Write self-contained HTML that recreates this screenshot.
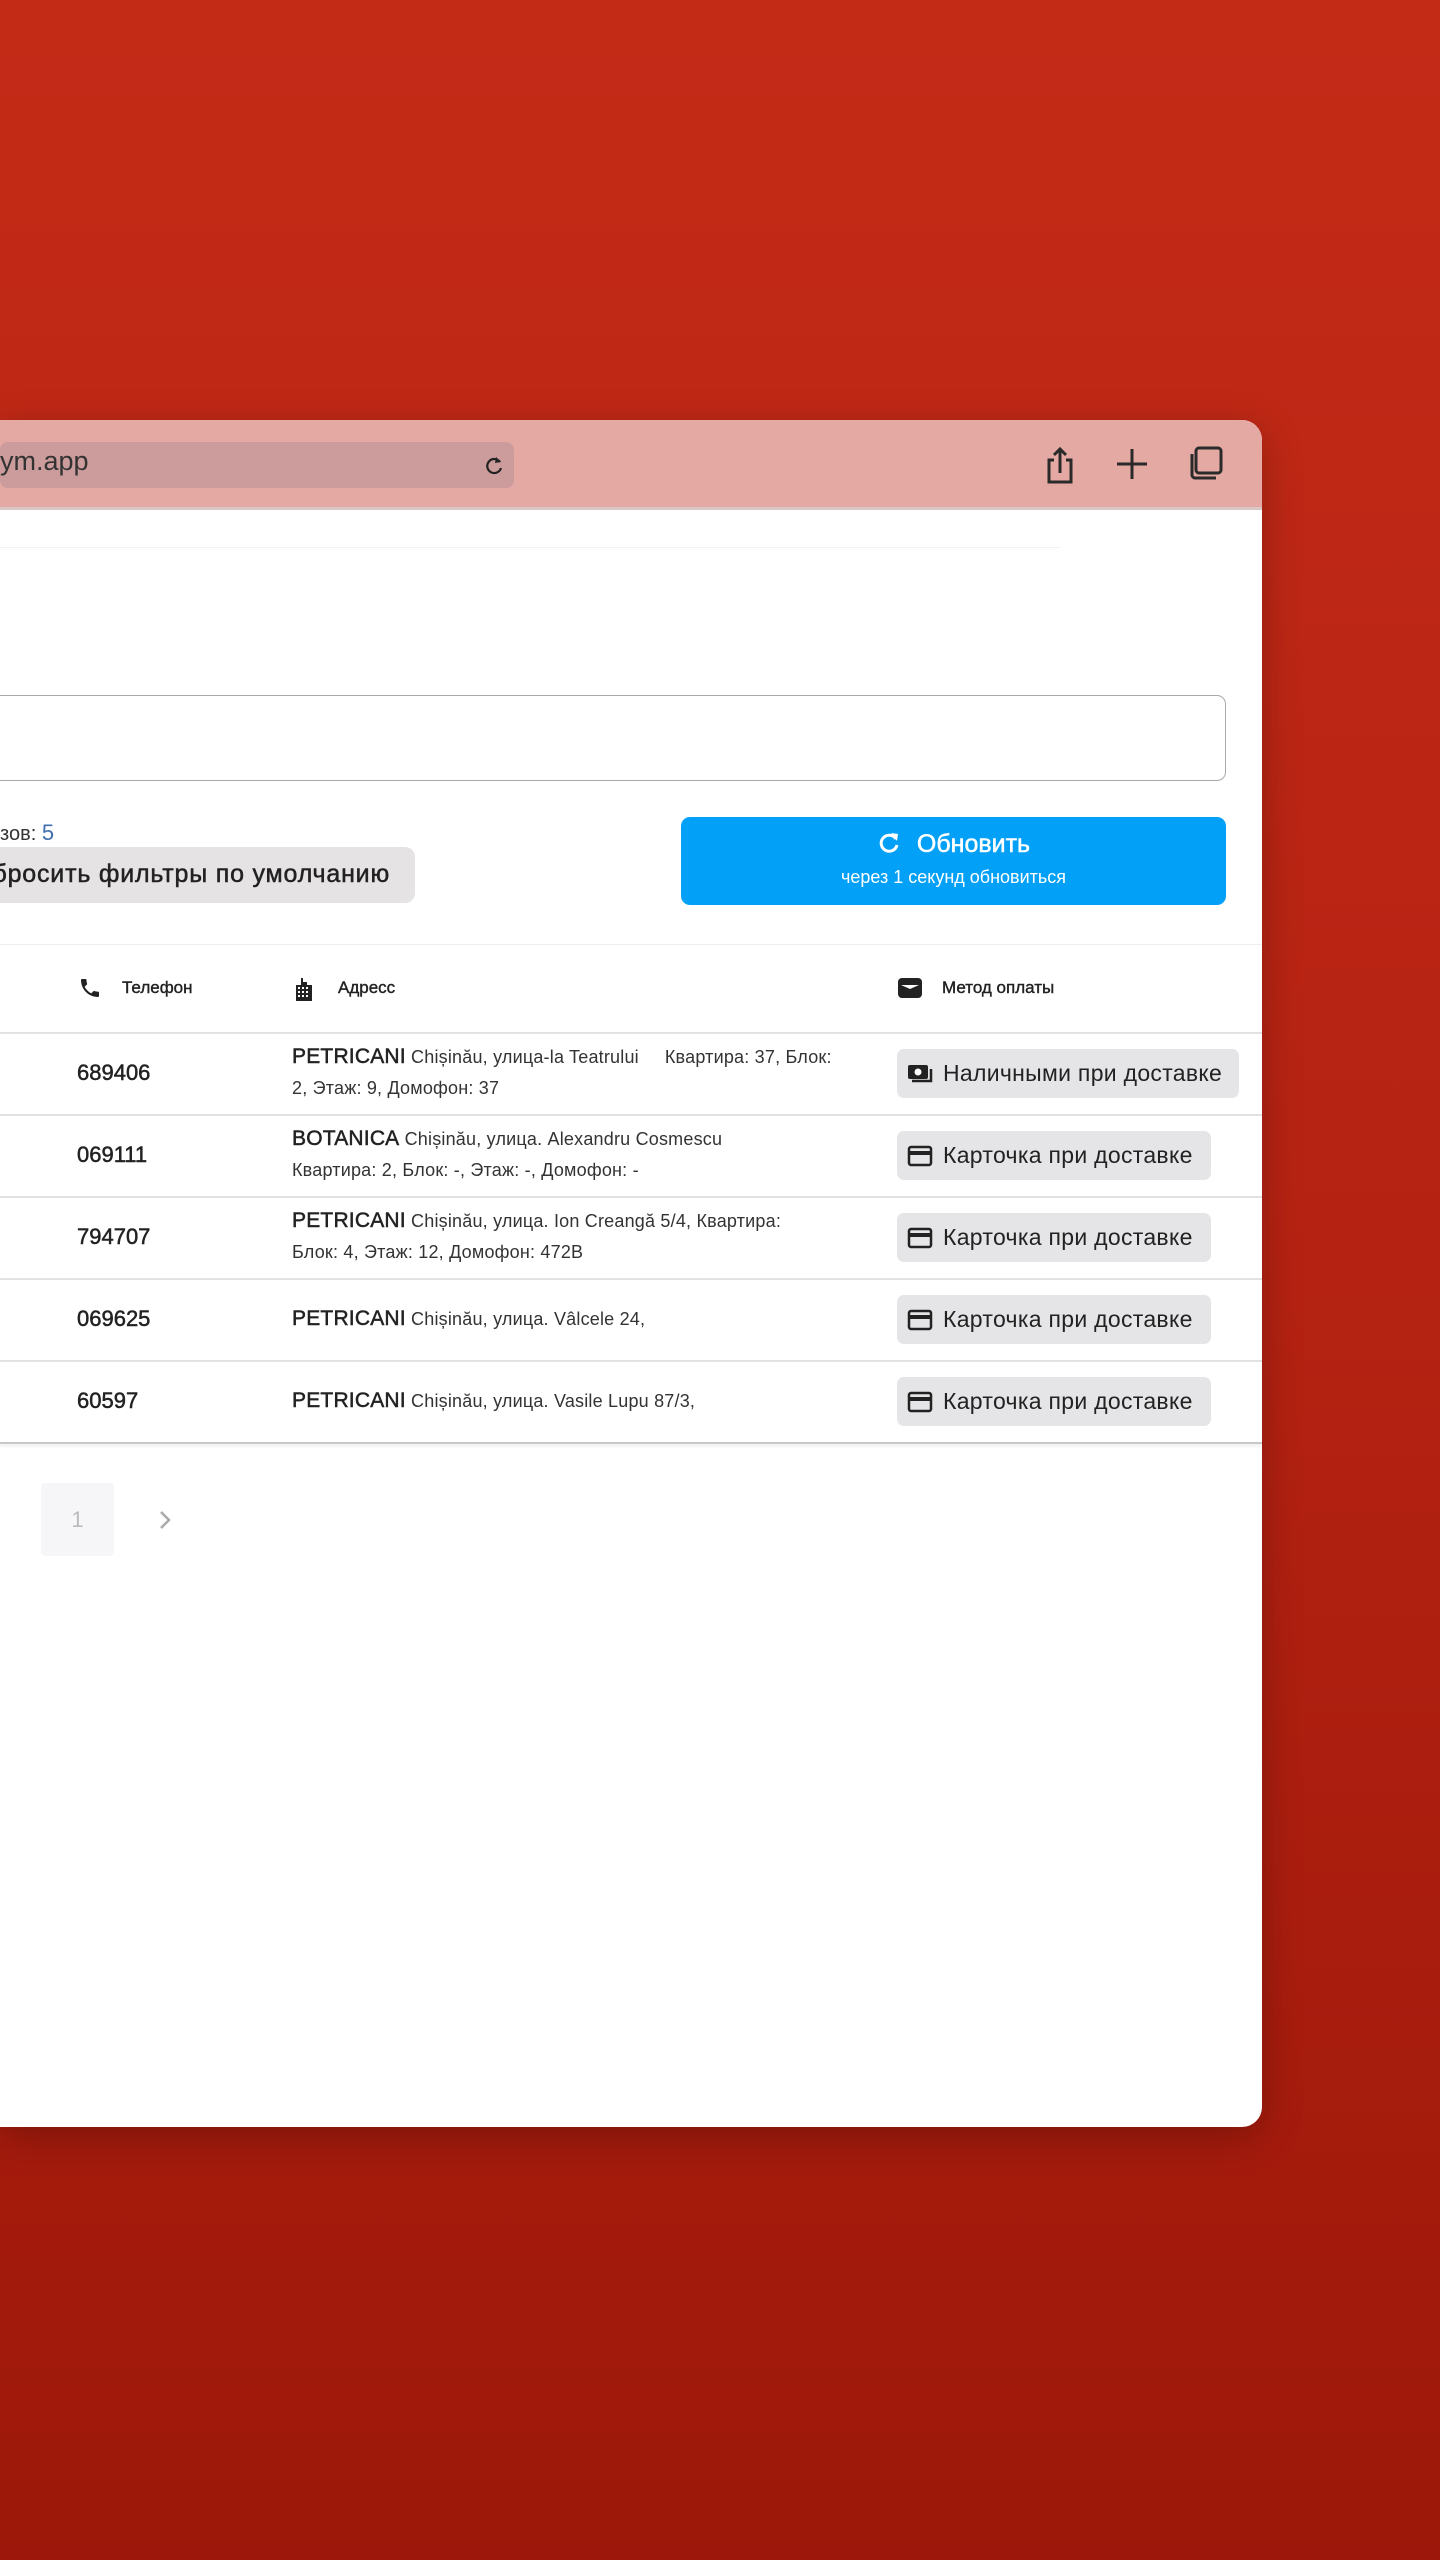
<!DOCTYPE html>
<html><head><meta charset="utf-8"><style>
*{margin:0;padding:0;box-sizing:border-box}
body{width:1440px;height:2560px;overflow:hidden;background:linear-gradient(180deg,#c42b17 0%,#b52212 50%,#9d180a 100%);font-family:"Liberation Sans",sans-serif;color:#222;position:relative}
.win{position:absolute;left:0;top:420px;width:1262px;height:1707px;background:#fff;border-radius:0 20px 20px 0;overflow:hidden;box-shadow:0 10px 40px rgba(0,0,0,.25)}
.a{position:absolute}
.m{-webkit-text-stroke:0.5px currentColor}
.bar{left:0;top:0;width:100%;height:90px;background:#e4a9a2;border-bottom:3px solid #d9c7c6}
.url{left:0;top:22px;width:514px;height:46px;background:#cc9b9b;border-radius:8px}
.row{left:0;width:1262px;height:82px;border-top:2px solid #e2e2e2}
.ph{left:77px;font-size:22px;color:#222;-webkit-text-stroke:0.5px #222}
.ad{left:292px;width:590px;font-size:18px;line-height:31px;color:#333;letter-spacing:.2px}
.ad b{font-size:21px;font-weight:normal;color:#222;-webkit-text-stroke:0.5px #222}
.chip{left:897px;height:49px;background:#e5e4e6;border-radius:7px;font-size:23px;color:#222;display:flex;align-items:center;padding-left:10px;letter-spacing:.3px}
.chip svg{margin-right:10px}
.hd{font-size:17px;-webkit-text-stroke:0.4px #222}
</style></head><body>
<div class="win">
 <div class="a bar"></div>
 <div class="a url"></div>
 <div class="a" style="left:0;top:26px;font-size:27px;color:#333">ym.app</div>
 <svg class="a" style="left:482px;top:34px" width="24" height="24" viewBox="0 0 24 24"><path d="M18 8A7 7 0 1 0 19 14" fill="none" stroke="#222" stroke-width="2.2"/><path d="M14 3l5 5-6 1z" fill="#222"/></svg>
 <svg class="a" style="left:1045px;top:26px" width="30" height="38" viewBox="0 0 30 38"><path d="M9 14H4v22h22V14h-5" fill="none" stroke="#2a2a2a" stroke-width="3"/><path d="M15 27V3M9 9l6-6 6 6" fill="none" stroke="#2a2a2a" stroke-width="3"/></svg>
 <svg class="a" style="left:1117px;top:29px" width="30" height="30" viewBox="0 0 30 30"><path d="M15 0v30M0 15h30" stroke="#2a2a2a" stroke-width="3"/></svg>
 <svg class="a" style="left:1187px;top:26px" width="36" height="36" viewBox="0 0 36 36"><rect x="9" y="2" width="25" height="25" rx="3" fill="none" stroke="#2a2a2a" stroke-width="3"/><path d="M5 8v21a3 3 0 0 0 3 3h21" fill="none" stroke="#2a2a2a" stroke-width="3"/></svg>
 <div class="a" style="left:0;top:127px;width:1060px;height:1px;background:#f2f2f2"></div>
 <div class="a" style="left:-10px;top:275px;width:1236px;height:86px;border:1.5px solid #a9a9a9;border-radius:9px"></div>
 <div class="a" style="left:0;top:400px;font-size:20px;color:#333">зов: <span style="color:#3f6fae;font-size:22px">5</span></div>
 <div class="a" style="left:-30px;top:427px;width:445px;height:56px;background:#e6e3e4;border-radius:10px"></div>
 <div class="a m" style="left:-400px;top:440px;width:790px;text-align:right;font-size:25px;letter-spacing:0.8px;color:#222;white-space:nowrap">Сбросить фильтры по умолчанию</div>
 <div class="a" style="left:681px;top:397px;width:545px;height:88px;background:#03a0f8;border-radius:9px;color:#fff;text-align:center">
  <div class="m" style="margin-top:13px;font-size:25px"><svg width="24" height="24" viewBox="0 0 24 24" style="vertical-align:-3px;margin-right:16px"><path d="M19 8A8 8 0 1 0 20 14" fill="none" stroke="#fff" stroke-width="3"/><path d="M14 2l7 1-1 7z" fill="#fff"/></svg>Обновить</div>
  <div style="margin-top:8px;font-size:18px">через 1 секунд обновиться</div>
 </div>
 <div class="a" style="left:0;top:524px;width:1262px;height:1px;background:#eee"></div>
 <svg class="a" style="left:78px;top:556px" width="24" height="24" viewBox="0 0 24 24"><path d="M6.6 10.8c1.4 2.8 3.8 5.1 6.6 6.6l2.2-2.2c.3-.3.7-.4 1-.2 1.1.4 2.300.6 3.600.6.6 0 1 .4 1 1V20c0 .6-.4 1-1 1C10.6 21 3 13.4 3 4c0-.6.4-1 1-1h3.5c.6 0 1 .4 1 1 0 1.3.2 2.5.6 3.6.1.3 0 .7-.2 1z" fill="#222"/></svg>
 <div class="a hd" style="left:122px;top:558px">Телефон</div>
 <svg class="a" style="left:293px;top:555px" width="24" height="26" viewBox="0 0 24 26"><path d="M8 3h2v4h4v3h5v16H3V10h5z" fill="#222"/><g fill="#fff"><rect x="5" y="12" width="2" height="2"/><rect x="9" y="12" width="2" height="2"/><rect x="13" y="12" width="2" height="2"/><rect x="5" y="16" width="2" height="2"/><rect x="9" y="16" width="2" height="2"/><rect x="13" y="16" width="2" height="2"/><rect x="5" y="20" width="2" height="2"/><rect x="9" y="20" width="2" height="2"/><rect x="13" y="20" width="2" height="2"/></g></svg>
 <div class="a hd" style="left:338px;top:558px">Адресс</div>
 <svg class="a" style="left:897px;top:557px" width="26" height="22" viewBox="0 0 26 22"><rect x="1" y="1" width="24" height="20" rx="4" fill="#222"/><path d="M4 8h18l-9 4z" fill="#fff"/></svg>
 <div class="a hd" style="left:942px;top:558px">Метод оплаты</div>

 <div class="a row" style="top:612px"></div>
 <div class="a ph" style="top:640px">689406</div>
 <div class="a ad" style="top:621px"><b>PETRICANI</b> Chișinău, улица-la Teatrului &nbsp;&nbsp;&nbsp; Квартира: 37, Блок:<br>2, Этаж: 9, Домофон: 37</div>
 <div class="a chip" style="top:629px;width:342px"><svg width="26" height="22" viewBox="0 0 26 22"><rect x="1" y="2" width="20" height="14" rx="2" fill="#222"/><circle cx="11" cy="9" r="3.5" fill="#fff"/><path d="M24 6v12H5" fill="none" stroke="#222" stroke-width="2.5"/></svg>Наличными при доставке</div>

 <div class="a row" style="top:694px"></div>
 <div class="a ph" style="top:722px">069111</div>
 <div class="a ad" style="top:703px"><b>BOTANICA</b> Chișinău, улица. Alexandru Cosmescu<br>Квартира: 2, Блок: -, Этаж: -, Домофон: -</div>
 <div class="a chip" style="top:711px;width:314px"><svg width="26" height="22" viewBox="0 0 26 22"><rect x="2" y="2" width="22" height="18" rx="2" fill="none" stroke="#222" stroke-width="2.5"/><rect x="2" y="6" width="22" height="4" fill="#222"/></svg>Карточка при доставке</div>

 <div class="a row" style="top:776px"></div>
 <div class="a ph" style="top:804px">794707</div>
 <div class="a ad" style="top:785px"><b>PETRICANI</b> Chișinău, улица. Ion Creangă 5/4, Квартира:<br>Блок: 4, Этаж: 12, Домофон: 472B</div>
 <div class="a chip" style="top:793px;width:314px"><svg width="26" height="22" viewBox="0 0 26 22"><rect x="2" y="2" width="22" height="18" rx="2" fill="none" stroke="#222" stroke-width="2.5"/><rect x="2" y="6" width="22" height="4" fill="#222"/></svg>Карточка при доставке</div>

 <div class="a row" style="top:858px"></div>
 <div class="a ph" style="top:886px">069625</div>
 <div class="a ad" style="top:883px"><b>PETRICANI</b> Chișinău, улица. Vâlcele 24,</div>
 <div class="a chip" style="top:875px;width:314px"><svg width="26" height="22" viewBox="0 0 26 22"><rect x="2" y="2" width="22" height="18" rx="2" fill="none" stroke="#222" stroke-width="2.5"/><rect x="2" y="6" width="22" height="4" fill="#222"/></svg>Карточка при доставке</div>

 <div class="a row" style="top:940px"></div>
 <div class="a ph" style="top:968px">60597</div>
 <div class="a ad" style="top:965px"><b>PETRICANI</b> Chișinău, улица. Vasile Lupu 87/3,</div>
 <div class="a chip" style="top:957px;width:314px"><svg width="26" height="22" viewBox="0 0 26 22"><rect x="2" y="2" width="22" height="18" rx="2" fill="none" stroke="#222" stroke-width="2.5"/><rect x="2" y="6" width="22" height="4" fill="#222"/></svg>Карточка при доставке</div>
 <div class="a" style="left:0;top:1022px;width:1262px;height:2px;background:#c8c8c8;box-shadow:0 2px 3px rgba(0,0,0,.1)"></div>

 <div class="a" style="left:41px;top:1063px;width:73px;height:73px;background:#f6f5f8;border-radius:4px;color:#bbb;font-size:22px;text-align:center;line-height:73px">1</div>
 <svg class="a" style="left:158px;top:1090px" width="14" height="20" viewBox="0 0 14 20"><path d="M3 2l8 8-8 8" fill="none" stroke="#aaa" stroke-width="2.5"/></svg>
</div>
</body></html>
